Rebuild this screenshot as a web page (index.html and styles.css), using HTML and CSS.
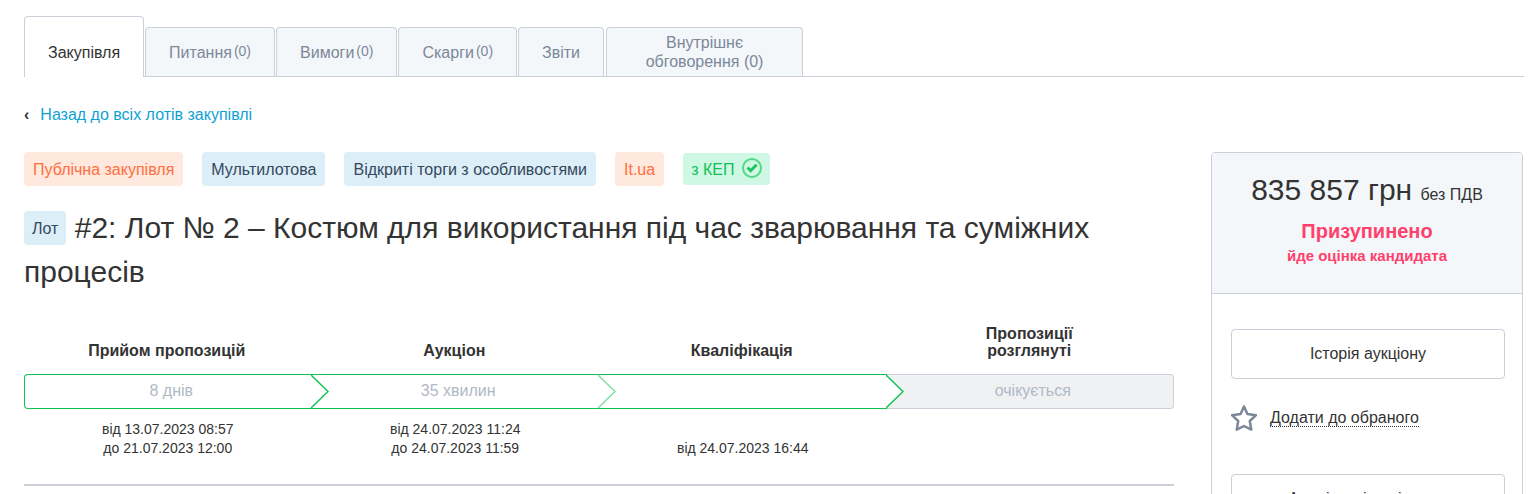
FILE: index.html
```html
<!DOCTYPE html>
<html lang="uk">
<head>
  <meta charset="UTF-8">
  <meta name="viewport" content="width=device-width, initial-scale=1.0">
  <title>Лот № 2 – Закупівля</title>
  <link rel="stylesheet" href="styles.css">
</head>
<body>
  <nav class="tabs">
    <a class="tab active" href="#">Закупівля</a>
    <a class="tab" href="#">Питання <span class="count">(0)</span></a>
    <a class="tab" href="#">Вимоги <span class="count">(0)</span></a>
    <a class="tab" href="#">Скарги <span class="count">(0)</span></a>
    <a class="tab" href="#">Звіти</a>
    <a class="tab wide" href="#">Внутрішнє<br>обговорення (0)</a>
  </nav>

  <div class="back">
    <span class="back-arrow">‹</span>
    <a href="#">Назад до всіх лотів закупівлі</a>
  </div>

  <div class="layout">
    <main class="content">
      <div class="labels">
        <span class="label orange">Публічна закупівля</span>
        <span class="label">Мультилотова</span>
        <span class="label">Відкриті торги з особливостями</span>
        <span class="label orange">It.ua</span>
        <span class="label green">з КЕП
          <svg class="check" viewBox="0 0 20 20" width="20" height="20">
            <circle cx="10" cy="10" r="9" fill="none" stroke="#4fd984" stroke-width="2"/>
            <path d="M5.5 9.5 L8.7 12.7 L14.5 6.8" fill="none" stroke="#1dc65b" stroke-width="3"/>
          </svg>
        </span>
      </div>

      <h1 class="title"><span class="label">Лот</span> #2: Лот № 2 – Костюм для використання під час зварювання та суміжних процесів</h1>

      <!-- stages of the purchase -->
      <div class="stages">
        <div class="stage done">
          <div class="stage-name">Прийом пропозицій</div>
          <div class="stage-bar">8 днів
            <svg class="arrow" viewBox="0 0 18 35" width="18" height="35"><path d="M0 1 L17 17.5 L0 34"/></svg>
          </div>
          <div class="stage-date">від 13.07.2023 08:57<br>до 21.07.2023 12:00</div>
        </div>
        <div class="stage done light">
          <div class="stage-name">Аукціон</div>
          <div class="stage-bar">35 хвилин
            <svg class="arrow" viewBox="0 0 18 35" width="18" height="35"><path d="M0 1 L17 17.5 L0 34"/></svg>
          </div>
          <div class="stage-date">від 24.07.2023 11:24<br>до 24.07.2023 11:59</div>
        </div>
        <div class="stage done">
          <div class="stage-name">Кваліфікація</div>
          <div class="stage-bar">
            <svg class="arrow" viewBox="0 0 18 35" width="18" height="35"><path d="M0 1 L17 17.5 L0 34"/></svg>
          </div>
          <div class="stage-date">від 24.07.2023 16:44</div>
        </div>
        <div class="stage">
          <div class="stage-name">Пропозиції<br>розглянуті</div>
          <div class="stage-bar">очікується</div>
          <div class="stage-date"></div>
        </div>
      </div>
    </main>

    <aside class="sidebar">
      <div class="price-box">
        <div class="price">835 857 грн <small>без ПДВ</small></div>
        <div class="status">Призупинено</div>
        <div class="status-note">йде оцінка кандидата</div>
      </div>
      <div class="actions">
        <button class="action" type="button">Історія аукціону</button>
        <div class="favorite">
          <svg viewBox="0 0 26 28" width="26" height="28">
            <path d="M13 2.5 L16.4 10 L25 11.2 L18.8 17 L20.3 25.6 L13 22 L5.7 25.6 L7.2 17 L1 11.2 L9.6 10 Z" fill="none" stroke="#7c8799" stroke-width="2.5" stroke-linejoin="round"/>
          </svg>
          <a href="#">Додати до обраного</a>
        </div>
        <button class="action" type="button">Аналітичні дані ринку</button>
      </div>
    </aside>
  </div>
</body>
</html>
```

FILE: styles.css
```css
* {
  box-sizing: border-box;
}
body {
  margin: 0;
  padding: 16px 4px 0 24px;
  height: 100vh;
  overflow: hidden;
  background-color: #fff;
  color: #333;
  font-family: "Liberation Sans", Arial, sans-serif;
  font-size: 16px;
}

/* tabs */
.tabs {
  display: flex;
  align-items: flex-end;
  gap: 1px;
  height: 61px;
  border-bottom: 1px solid #cdd0db;
}
.tab {
  display: flex;
  align-items: center;
  justify-content: center;
  gap: 2px;
  height: 49px;
  padding: 0 23px;
  border: 1px solid #cdd0db;
  border-bottom: none;
  border-radius: 4px 4px 0 0;
  background-color: #f3f7fa;
  color: #7c8799;
  line-height: 19px;
  text-align: center;
  text-decoration: none;
}
.tab.active {
  height: 61px;
  margin-bottom: -1px;
  padding-top: 10px;
  background-color: #fff;
  color: #333;
}
.tab.wide {
  width: 197px;
  margin-left: 1px;
}
.count {
  padding-bottom: 2px;
  font-size: 14px;
  line-height: 16px;
}

.back {
  display: flex;
  gap: 11px;
  margin-top: 28px;
  line-height: 20px;
}
.back-arrow {
  font-weight: bold;
}
.back a {
  color: #0ea2d3;
  text-decoration: none;
}

.layout {
  display: flex;
  align-items: flex-start;
  gap: 37px;
  margin-top: 27px;
}
.content {
  flex: 1;
  min-width: 0;
  padding-bottom: 26px;
  border-bottom: 2px solid #cdd0db;
}

/* labels */
.labels {
  display: flex;
  align-items: center;
  gap: 19px;
}
.label {
  padding: 1px 9px 0;
  border-radius: 4px;
  background-color: #dceef7;
  color: #34495e;
  font-size: 16px;
  line-height: 33px;
}
.label.orange {
  background-color: #ffe8de;
  color: #ff6f3d;
}
.label.green {
  display: flex;
  align-items: center;
  gap: 8px;
  padding: 1px 8px 0;
  background-color: #cef8e4;
  color: #0fc254;
  line-height: 31px;
}
.check {
  margin-bottom: 3px;
}

.title {
  margin: 20px 0 0;
  font-size: 30px;
  font-weight: normal;
  line-height: 44px;
}
.title .label {
  display: inline-block;
  padding: 1px 8px 0;
  vertical-align: 4px;
}

/* stages */
.stages {
  display: flex;
  margin-top: 29px;
}
.stage {
  flex: 1;
  text-align: center;
}
.stage-name {
  display: flex;
  align-items: flex-end;
  justify-content: center;
  height: 36px;
  padding-right: 2px;
  font-weight: bold;
  line-height: 17px;
}
.stage-bar {
  position: relative;
  height: 35px;
  margin-top: 15px;
  padding-left: 6px;
  border: 1px solid #cdd0db;
  border-left: none;
  background-color: #eff1f3;
  color: #b0b9c5;
  line-height: 32px;
}
.stage.done .stage-bar {
  border-color: #0fc254;
  border-right: none;
  background-color: #fff;
}
.stage:first-child .stage-bar {
  border-left: 1px solid #0fc254;
  border-radius: 4px 0 0 4px;
}
.stage:last-child .stage-bar {
  border-radius: 0 4px 4px 0;
}
.arrow {
  position: absolute;
  top: -1px;
  right: -17px;
  z-index: 1;
}
.arrow path {
  fill: #fff;
  stroke: #0fc254;
  stroke-width: 1.5;
}
.light .arrow path {
  stroke: #7fdda3;
}
.stage-date {
  display: flex;
  flex-direction: column;
  justify-content: flex-end;
  height: 49px;
  font-size: 14px;
  line-height: 19px;
}

/* sidebar */
.sidebar {
  width: 312px;
  margin-right: 1px;
  border: 1px solid #cdd0db;
  border-radius: 4px;
  overflow: hidden;
}
.price-box {
  padding: 17px 0 28px;
  border-bottom: 1px solid #cdd0db;
  background-color: #f3f7fa;
  text-align: center;
}
.price {
  font-size: 30px;
  line-height: 40px;
}
.price small {
  font-size: 16px;
}
.status {
  margin-top: 4px;
  color: #ff3f6c;
  font-size: 20px;
  font-weight: bold;
  line-height: 24px;
}
.status-note {
  margin-top: 4px;
  color: #ff3f6c;
  font-size: 15px;
  font-weight: bold;
  line-height: 18px;
}
.actions {
  padding: 35px 17px 20px 19px;
}
.action {
  width: 100%;
  height: 50px;
  border: 1px solid #cdd0db;
  border-radius: 4px;
  background-color: #fff;
  color: #333;
  font-family: inherit;
  font-size: 16px;
  cursor: pointer;
}
.favorite {
  display: flex;
  align-items: center;
  gap: 13px;
  height: 95px;
  padding-bottom: 18px;
}
.favorite a {
  border-bottom: 1px dotted #333;
  color: #333;
  line-height: 17px;
  text-decoration: none;
}
```
